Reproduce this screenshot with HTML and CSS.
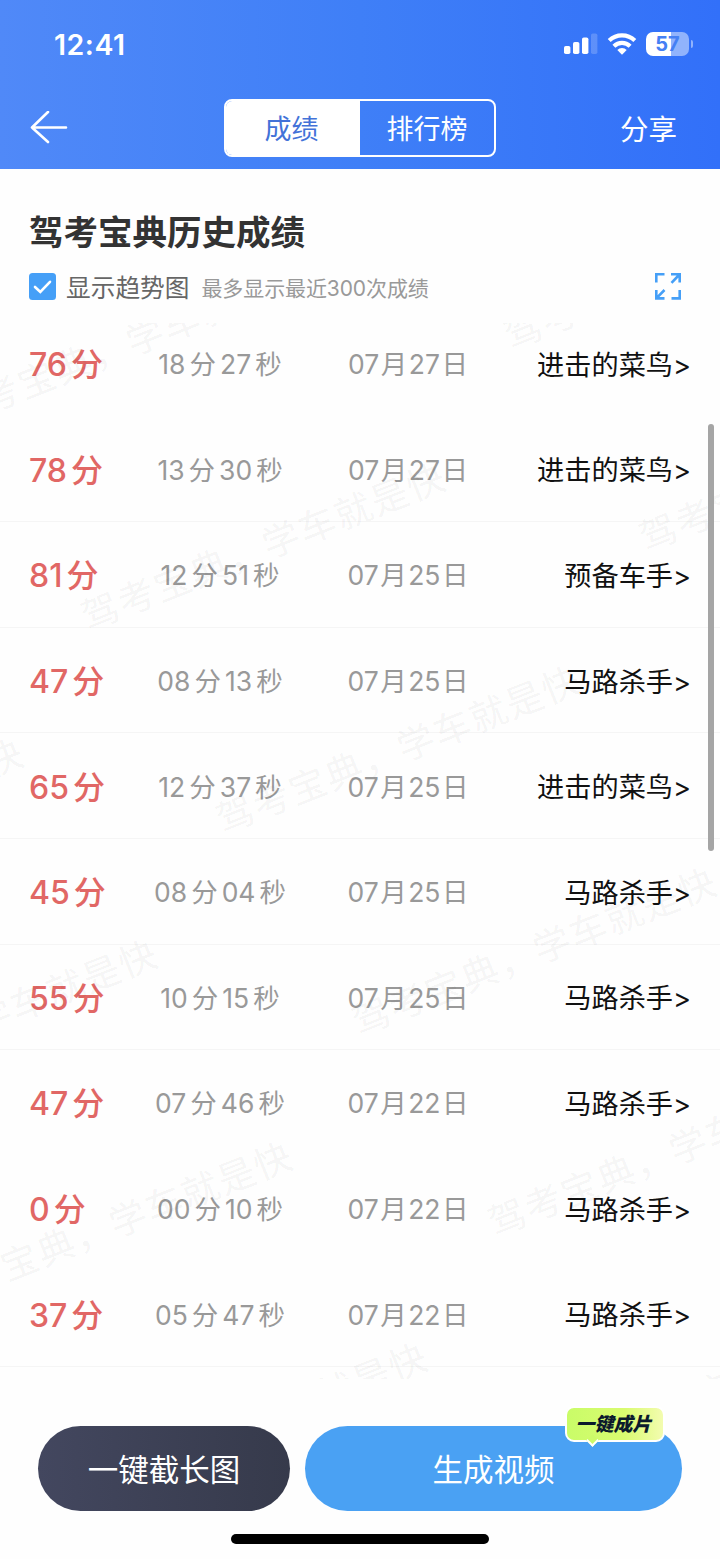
FILE: index.html
```
<!DOCTYPE html>
<html lang="zh-CN">
<head>
<meta charset="UTF-8">
<meta name="viewport" content="width=device-width, initial-scale=1.0">
<title>驾考宝典历史成绩</title>
<link rel="stylesheet" href="styles.css">
</head>
<body>

<!-- 顶部 -->
<header class="header">
  <div class="status">
    <span class="clock">12:41</span>
    <div class="status-icons">
      <svg width="34" height="22" viewBox="0 0 34 22" fill="#fff">
        <rect x="0" y="13" width="6.4" height="8" rx="1.8"/>
        <rect x="9" y="9" width="6.4" height="12" rx="1.8"/>
        <rect x="18" y="4.5" width="6.4" height="16.5" rx="1.8"/>
        <rect x="27" y="0.5" width="6.4" height="20.5" rx="1.8" opacity=".2"/>
      </svg>
      <svg class="wifi" width="30" height="22" viewBox="0 0 30 22">
        <g fill="none" stroke="#fff" stroke-width="4.2">
          <path d="M2.2 7.6A18.4 18.4 0 0 1 27.8 7.6"/>
          <path d="M6.9 13.2A11.6 11.6 0 0 1 23.1 13.2"/>
        </g>
        <path fill="#fff" d="M10.3 17A6.6 6.6 0 0 1 19.7 17L15 21.8Z"/>
      </svg>
      <div class="battery"><span>57</span></div>
    </div>
  </div>
  <nav class="nav">
    <svg class="back" width="38" height="34" viewBox="0 0 38 34" fill="none" stroke="#fff" stroke-width="2.6" stroke-linecap="round" stroke-linejoin="round">
      <path d="M18 1L2 16.5L18 31M2 16.5H36"/>
    </svg>
    <div class="tabs">
      <span class="tab active">成绩</span>
      <span class="tab">排行榜</span>
    </div>
    <span class="share">分享</span>
  </nav>
</header>

<!-- 标题 -->
<section class="title">
  <h1>驾考宝典历史成绩</h1>
  <div class="option">
    <svg class="check" width="27" height="27" viewBox="0 0 27 27">
      <rect width="27" height="27" rx="3.5" fill="#459ff7"/>
      <path d="M6 14L11.3 19L21 8.8" fill="none" stroke="#fff" stroke-width="2.6" stroke-linecap="round"/>
    </svg>
    <span class="label">显示趋势图</span>
    <span class="tip">最多显示最近300次成绩</span>
    <svg class="expand" width="26" height="27" viewBox="0 0 26 27" fill="none" stroke="#459ff7" stroke-width="2.6">
      <path d="M1.3 9.5V1.3H9.5M16 1.3H24.7V9.5M24 2L16.5 9.8M24.7 17V25.4H16.5M1.3 17V25.4H9.5M2 24.7L9.5 17"/>
    </svg>
  </div>
</section>

<!-- 成绩列表 -->
<main class="list">
  <div class="row"><div class="score"><b>76</b>分</div><div class="time"><b>18</b>分<b>27</b>秒</div><div class="date"><b>07</b>月<b>27</b>日</div><div class="rank">进击的菜鸟&gt;</div></div>
  <div class="row line"><div class="score"><b>78</b>分</div><div class="time"><b>13</b>分<b>30</b>秒</div><div class="date"><b>07</b>月<b>27</b>日</div><div class="rank">进击的菜鸟&gt;</div></div>
  <div class="row line"><div class="score"><b>81</b>分</div><div class="time"><b>12</b>分<b>51</b>秒</div><div class="date"><b>07</b>月<b>25</b>日</div><div class="rank">预备车手&gt;</div></div>
  <div class="row line"><div class="score"><b>47</b>分</div><div class="time"><b>08</b>分<b>13</b>秒</div><div class="date"><b>07</b>月<b>25</b>日</div><div class="rank">马路杀手&gt;</div></div>
  <div class="row line"><div class="score"><b>65</b>分</div><div class="time"><b>12</b>分<b>37</b>秒</div><div class="date"><b>07</b>月<b>25</b>日</div><div class="rank">进击的菜鸟&gt;</div></div>
  <div class="row line"><div class="score"><b>45</b>分</div><div class="time"><b>08</b>分<b>04</b>秒</div><div class="date"><b>07</b>月<b>25</b>日</div><div class="rank">马路杀手&gt;</div></div>
  <div class="row line"><div class="score"><b>55</b>分</div><div class="time"><b>10</b>分<b>15</b>秒</div><div class="date"><b>07</b>月<b>25</b>日</div><div class="rank">马路杀手&gt;</div></div>
  <div class="row"><div class="score"><b>47</b>分</div><div class="time"><b>07</b>分<b>46</b>秒</div><div class="date"><b>07</b>月<b>22</b>日</div><div class="rank">马路杀手&gt;</div></div>
  <div class="row"><div class="score"><b>0</b>分</div><div class="time"><b>00</b>分<b>10</b>秒</div><div class="date"><b>07</b>月<b>22</b>日</div><div class="rank">马路杀手&gt;</div></div>
  <div class="row line"><div class="score"><b>37</b>分</div><div class="time"><b>05</b>分<b>47</b>秒</div><div class="date"><b>07</b>月<b>22</b>日</div><div class="rank">马路杀手&gt;</div></div>

  <!-- 水印 -->
  <svg class="watermark" width="720" height="1056" viewBox="0 323 720 1056">
    <text transform="translate(-48 428) rotate(-21.7)">驾考宝典，学车就是快</text>
    <text transform="translate(511 350) rotate(-21.7)">驾考宝典，学车就是快</text>
    <text transform="translate(88 631) rotate(-21.7)">驾考宝典，学车就是快</text>
    <text transform="translate(646 552) rotate(-21.7)">驾考宝典，学车就是快</text>
    <text transform="translate(223 834) rotate(-21.7)">驾考宝典，学车就是快</text>
    <text transform="translate(-334 907) rotate(-21.7)">驾考宝典，学车就是快</text>
    <text transform="translate(359 1036) rotate(-21.7)">驾考宝典，学车就是快</text>
    <text transform="translate(-200 1108) rotate(-21.7)">驾考宝典，学车就是快</text>
    <text transform="translate(495 1237) rotate(-21.7)">驾考宝典，学车就是快</text>
    <text transform="translate(-65 1310) rotate(-21.7)">驾考宝典，学车就是快</text>
    <text transform="translate(630 1439) rotate(-21.7)">驾考宝典，学车就是快</text>
    <text transform="translate(70 1511) rotate(-21.7)">驾考宝典，学车就是快</text>
  </svg>
  <div class="scrollbar"></div>
</main>

<!-- 底部按钮 -->
<footer class="footer">
  <div class="btn dark">一键截长图</div>
  <div class="btn blue">生成视频
    <div class="badge"><span>一键成片</span></div>
  </div>
</footer>
<div class="home-bar"></div>

</body>
</html>
```
FILE: styles.css
```
* {
  box-sizing: border-box;
}

body {
  margin: 0;
  width: 720px;
  height: 1559px;
  overflow: hidden;
  background: #fefefe;
  font-family: Inter, "Noto Sans CJK SC", sans-serif;
  white-space: nowrap;
}

svg {
  display: block;
}

/* 顶部 */
.header {
  height: 169px;
  background: linear-gradient(90deg, #5089f8, #3f7ff7 50%, #3270f9);
  color: #fff;
}

.status {
  display: flex;
  justify-content: space-between;
  height: 88px;
  padding: 0 28px 0 54px;
  align-items: center;
}

.clock {
  font-size: 28.5px;
  font-weight: 600;
  letter-spacing: 0.5px;
}

.status-icons {
  display: flex;
  align-items: center;
}

.wifi {
  margin: 0 9px 0 9px;
}

.battery {
  position: relative;
  width: 43px;
  height: 24px;
  margin-right: 3px;
  border-radius: 7px;
  background: linear-gradient(90deg, #fff 57%, #91b3fc 57%);
  color: #4580f4;
  font-size: 20px;
  font-weight: 700;
  line-height: 24px;
  text-align: center;
}

.battery::after {
  content: "";
  position: absolute;
  right: -4px;
  top: 8px;
  width: 2.5px;
  height: 8px;
  border-radius: 0 3px 3px 0;
  background: #91b3fc;
}

.nav {
  display: grid;
  grid-template-columns: 194px 272px 1fr;
  height: 80px;
  padding: 0 43px 0 30px;
  align-items: center;
}

.tabs {
  display: flex;
  height: 58px;
  border: 2px solid #fff;
  border-radius: 8px;
  overflow: hidden;
}

.tab {
  width: 134px;
  font-size: 27px;
  line-height: 57px;
  text-align: center;
}

.tab.active {
  padding-right: 3px;
  background: #fff;
  color: #4272d8;
}

.share {
  padding-bottom: 1px;
  font-size: 28.5px;
  text-align: right;
}

/* 标题 */
.title {
  height: 142px;
  padding: 39px 39px 0 29px;
}

h1 {
  margin: 0;
  font-size: 34.5px;
  line-height: 50px;
  font-weight: 600;
  color: #333;
}

.option {
  display: flex;
  align-items: center;
  height: 40px;
  margin-top: 8px;
}

.label {
  margin-left: 10px;
  font-size: 24.7px;
  color: #666;
}

.tip {
  padding-top: 2px;
  margin-left: 12px;
  font-size: 21px;
  letter-spacing: -0.1px;
  color: #999;
}

.expand {
  margin-left: auto;
}

/* 成绩列表 */
.list {
  position: relative;
  height: 1067px;
}

.row {
  display: grid;
  grid-template-columns: 110px 160px 216px 1fr;
  align-items: center;
  height: 105.6px;
  padding: 0 30px 1px;
  border-bottom: 1px solid transparent;
}

.row.line {
  border-bottom-color: #f5f5f5;
}

.row b {
  font-weight: inherit;
}

.score {
  padding-bottom: 1px;
  font-size: 32px;
  font-weight: 500;
  color: #e16765;
}

.score b {
  margin: 0 4px 0 -1px;
}

.time,
.date {
  font-size: 26.5px;
  color: #999;
  text-align: center;
}

.time b {
  margin: 0 4px;
}

.date b {
  margin: 0 1.5px;
}

.time b:first-child,
.date b:first-child {
  margin-left: 0;
}

.rank {
  font-size: 27.2px;
  color: #111;
  text-align: right;
  margin-right: -1px;
}

.watermark {
  position: absolute;
  left: 0;
  top: 12px;
  overflow: hidden;
  font-size: 37px;
  letter-spacing: 1.9px;
  fill: rgba(0, 0, 0, .055);
  font-weight: 400;
}

.scrollbar {
  position: absolute;
  right: 6px;
  top: 113px;
  width: 6px;
  height: 427px;
  border-radius: 3px;
  background: #a5a5a5;
}

/* 底部按钮 */
.footer {
  display: flex;
  gap: 15px;
  padding: 48px 38px 0;
}

.btn {
  height: 85px;
  border-radius: 43px;
  color: #fff;
  font-size: 30.5px;
  line-height: 87px;
  text-align: center;
}

.dark {
  width: 252px;
  background: linear-gradient(90deg, #43475f, #363a4b);
}

.blue {
  position: relative;
  width: 377px;
  background: #4aa1f3;
}

.badge {
  position: absolute;
  right: 17px;
  top: -20px;
  width: 100px;
  height: 36px;
  border: 2px solid #fff;
  border-radius: 9px;
  background: linear-gradient(90deg, #c9fc68, #d9fb70 60%, #f3fcb0);
  color: #0b1a2c;
  font-size: 19px;
  font-weight: 900;
  font-style: italic;
  line-height: 33px;
}

.badge span {
  margin-right: 3px;
}

.badge::after {
  content: "";
  position: absolute;
  left: 21px;
  top: 28px;
  width: 7px;
  height: 7px;
  border: solid #fff;
  border-width: 0 2px 2px 0;
  background: #cdfb69;
  transform: rotate(45deg);
}

.home-bar {
  width: 258px;
  height: 10px;
  margin: 23px auto 0;
  border-radius: 5px;
  background: #000;
}
```
